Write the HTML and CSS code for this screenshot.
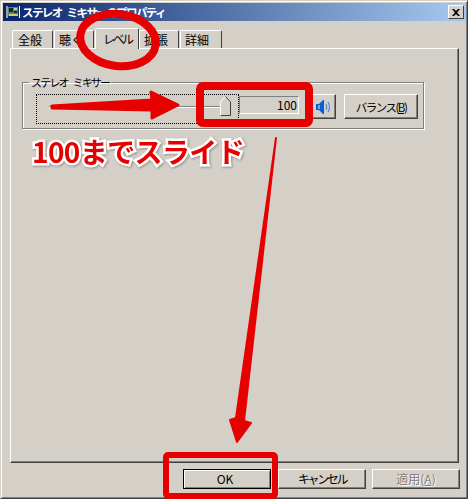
FILE: index.html
```html
<!DOCTYPE html>
<html lang="ja">
<head>
    <meta charset="UTF-8">
    <meta name="viewport" content="width=device-width, initial-scale=1.0">
    <title>ステレオ ミキサーのプロパティ</title>
    <link rel="stylesheet" href="styles.css">
</head>
<body>
    <div class="window">
        <div class="titlebar">
            <svg class="app-icon" width="15" height="12" viewBox="0 0 15 12">
                <rect x="0" y="1" width="12" height="9" fill="#4f8a6a"/>
                <rect x="0" y="0" width="2" height="12" fill="#a0a0a0"/>
                <rect x="3" y="2" width="4" height="4" fill="#10283a"/>
                <rect x="8" y="2" width="3" height="2" fill="#c8d0a0"/>
                <rect x="8" y="5" width="3" height="2" fill="#10283a"/>
                <rect x="3" y="8" width="9" height="2" fill="#d8c860"/>
                <rect x="13" y="0" width="1" height="12" fill="#fff"/>
            </svg>
            <span class="title-text">ステレオ ミキサーのプロパティ</span>
            <button class="close-btn">
                <svg width="8" height="7" viewBox="0 0 8 7">
                    <path d="M0 0h2l2 2 2-2h2L5 3.500 8 7H6L4 5 2 7H0l3-3.500z" fill="#000"/>
                </svg>
            </button>
        </div>

        <div class="tabs">
            <div class="tab first">全般</div>
            <div class="tab">聴く</div>
            <div class="tab active">レベル</div>
            <div class="tab">拡張</div>
            <div class="tab last">詳細</div>
        </div>

        <div class="panel">
            <fieldset class="group">
                <legend>ステレオ ミキサー</legend>
                <div class="controls">
                    <div class="slider">
                        <div class="track"></div>
                        <svg class="thumb" width="11" height="20" viewBox="0 0 11 20">
                            <path d="M.5 19.500V6L5.500.5 10.500 6v13.500z" fill="#d4d0c8" stroke="#fff"/>
                            <path d="M5.500.5 10.500 6v13.500H.5" fill="none" stroke="#404040"/>
                        </svg>
                    </div>
                    <div class="value">100</div>
                    <button class="btn speaker-btn">
                        <svg width="16" height="16" viewBox="0 0 16 16">
                            <path d="M1 5h3l4-4h1v14H8l-4-4H1z" fill="#0a5fd0"/>
                            <path d="M3 6v4h2V6z" fill="#6aa8f0"/>
                            <path d="M11 5q1.500 3 0 6M13 3q3 5 0 10" fill="none" stroke="#4a90e0" stroke-width="1.200"/>
                        </svg>
                    </button>
                    <button class="btn balance-btn">バランス(<u>B</u>)</button>
                </div>
            </fieldset>
        </div>

        <div class="actions">
            <button class="btn action default">OK</button>
            <button class="btn action cancel">キャンセル</button>
            <button class="btn action disabled">適用(<u>A</u>)</button>
        </div>
    </div>

    <!-- red annotations drawn over the dialog -->
    <svg class="marks" width="469" height="503" viewBox="0 0 469 503">
        <ellipse cx="118" cy="40" rx="38" ry="26" transform="rotate(8 118 40)" fill="none" stroke="#e60000" stroke-width="8"/>
        <rect x="200" y="86" width="109" height="37" rx="3" fill="none" stroke="#e60000" stroke-width="8"/>
        <rect x="166" y="455" width="109" height="41" rx="2" fill="none" stroke="#e60000" stroke-width="6"/>
        <path d="M52 106 152 100 151 92 178 105 152 118 152 110 52 108z" fill="#e60000" stroke="#e60000" stroke-width="3" stroke-linejoin="round"/>
        <path d="M276 138 244 421 251 423 237 442 230 420 236 418z" fill="#e60000" stroke="#e60000" stroke-width="2" stroke-linejoin="round"/>
    </svg>
    <div class="note">100までスライド</div>
</body>
</html>
```

FILE: styles.css
```css
* {
    box-sizing: border-box;
}

body {
    margin: 0;
    width: 469px;
    height: 503px;
    background: #fff;
    font-family: "Noto Sans CJK JP", "Liberation Sans", sans-serif;
    font-size: 12px;
    color: #000;
    overflow: hidden;
}

.window {
    display: flex;
    flex-direction: column;
    width: 468px;
    height: 499px;
    padding: 1px;
    background: #d4d0c8;
    border: 1px solid;
    border-color: #d4d0c8 #404040 #404040 #d4d0c8;
    box-shadow: inset 1px 1px 0 #fff, inset -1px -1px 0 #808080;
}

.titlebar {
    display: flex;
    align-items: center;
    height: 18px;
    margin: 1px 0 0 1px;
    padding: 0 2px 0 3px;
    background: linear-gradient(90deg, #0a246a, #a6caf0);
    color: #fff;
}

.app-icon {
    flex: none;
    margin-right: 1px;
}

.title-text {
    flex: 1;
    font-size: 11.500px;
    font-weight: 700;
    line-height: 18px;
    letter-spacing: -1.600px;
    word-spacing: 4px;
    white-space: nowrap;
}

.close-btn {
    display: flex;
    align-items: center;
    justify-content: center;
    width: 16px;
    height: 14px;
    padding: 0;
    background: #d4d0c8;
    border: 1px solid;
    border-color: #fff #404040 #404040 #fff;
}

.tabs {
    display: flex;
    align-items: flex-end;
    height: 27px;
    padding-left: 10px;
}

.tab {
    width: 40px;
    height: 18px;
    margin-right: 1px;
    padding-left: 4px;
    background: #d4d0c8;
    border: 1px solid;
    border-color: #fff #404040 #d4d0c8 #fff;
    border-bottom: 0;
    border-radius: 2px 2px 0 0;
    line-height: 18px;
}

.tab.first {
    width: 41px;
    padding-left: 5px;
}

.tab.last {
    width: 42px;
}

.tab.active {
    position: relative;
    z-index: 1;
    width: 44px;
    height: 21px;
    margin-right: 0;
    margin-bottom: -1px;
    padding-left: 7px;
    line-height: 19px;
    letter-spacing: -2.500px;
}

.panel {
    height: 415px;
    margin-left: 8px;
    margin-right: 7px;
    padding: 26px 34px 0 11px;
    background: #d4d0c8;
    border: 1px solid;
    border-color: #fff #404040 #404040 #fff;
    box-shadow: inset -1px -1px 0 #808080;
}

.group {
    width: 402px;
    height: 54px;
    min-width: 0;
    margin: 0;
    padding: 5px 5px 0 13px;
    border: 1px solid #808080;
    box-shadow: 1px 1px 0 #fff, inset 1px 1px 0 #fff;
}

.group legend {
    height: 14px;
    margin-left: -7px;
    padding: 0 2px;
    line-height: 14px;
    font-size: 11px;
    letter-spacing: -1.800px;
    word-spacing: 4px;
}

.controls {
    display: flex;
    align-items: flex-start;
}

.slider {
    position: relative;
    width: 203px;
    height: 30px;
    border: 1px dotted #000;
}

.track {
    position: absolute;
    left: 12px;
    right: 8px;
    top: 11px;
    height: 2px;
    background: #808080;
    border-bottom: 1px solid #fff;
}

.thumb {
    position: absolute;
    left: 183px;
    top: 1px;
}

.value {
    width: 60px;
    height: 18px;
    margin-top: 2px;
    padding-right: 1px;
    border: 1px solid;
    border-color: #808080 #fff #fff #808080;
    line-height: 16px;
    text-align: right;
    font-size: 12px;
}

.btn {
    padding: 0;
    background: #d4d0c8;
    border: 1px solid;
    border-color: #fff #404040 #404040 #fff;
    box-shadow: inset -1px -1px 0 #808080;
    font: inherit;
    color: #000;
}

.speaker-btn {
    display: flex;
    align-items: center;
    justify-content: flex-start;
    width: 24px;
    height: 25px;
    margin-left: 13px;
    padding-left: 2px;
}

.balance-btn {
    width: 74px;
    height: 25px;
    margin-left: 8px;
    font-size: 11.500px;
    letter-spacing: -1.500px;
}

.actions {
    display: flex;
    justify-content: flex-start;
    padding: 6px 0 0 181px;
}

.action {
    width: 88px;
    height: 20px;
    line-height: 16px;
}

.action.default {
    padding-right: 4px;
    border: 1px solid #000;
    box-shadow: inset 1px 1px 0 #fff, inset -1px -1px 0 #808080;
}

.action.cancel {
    margin-left: 7px;
    letter-spacing: -2.400px;
}

.action.disabled {
    margin-left: 6px;
    color: #808080;
    text-shadow: 1px 1px 0 #fff;
}

.marks {
    position: absolute;
    left: 0;
    top: 0;
}

.note {
    position: absolute;
    left: 32px;
    top: 133px;
    font-size: 28px;
    font-weight: 700;
    line-height: 36px;
    letter-spacing: -.6px;
    white-space: nowrap;
    color: #e60000;
    -webkit-text-stroke: 5px #fff;
    paint-order: stroke fill;
    filter: drop-shadow(1px 1px 1px rgba(0, 0, 0, .3));
}
```
